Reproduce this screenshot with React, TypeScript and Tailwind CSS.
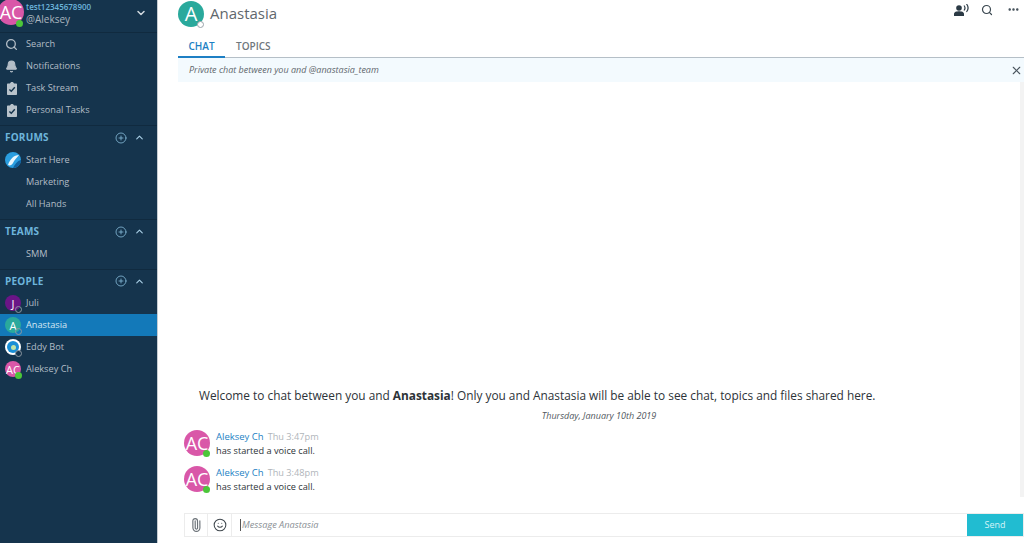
import { Search, Bell, ChevronDown, ChevronUp, CirclePlus, X, MoreHorizontal, Paperclip, Smile } from 'lucide-react'
import type { ReactNode } from 'react'

// Avatar with presence dot
const Avatar = ({ size, bg, label, textSize, status, dotClass }: { size: string; bg: string; label: string; textSize: string; status: string; dotClass: string }) => (
  <div className={`relative shrink-0 rounded-full flex items-center justify-center text-white ${size} ${bg} ${textSize}`}>
    <span className="leading-none">{label}</span>
    <span className={`absolute rounded-full w-[7px] h-[7px] ${dotClass} ${status}`}></span>
  </div>
)

// Filled clipboard with a tick, lucide only has the outlined one
const TaskIcon = () => (
  <svg width="12" height="13" viewBox="0 0 12 13" className="ml-[1px]">
    <path d="M1 2.2C1 1.8 1.3 1.5 1.7 1.5H4C4.2 .7 4.9 0 6 0S7.8 .7 8 1.5H10.3C10.7 1.5 11 1.8 11 2.2V12C11 12.5 10.7 13 10.2 13H1.8C1.3 13 1 12.5 1 12Z" fill="#b9c3cb" />
    <path d="M3.4 7.4L5.3 9.3L8.8 5.3" fill="none" stroke="#15344d" strokeWidth="1.4" />
  </svg>
)

const NavRow = ({ icon, label, active }: { icon?: ReactNode; label: string; active?: boolean }) => (
  <div className={`h-[22px] flex items-center text-[9.2px] ${active ? 'bg-[#1379b9] text-[#d5e6f2]' : 'text-[#b3bdc6]'}`}>
    <div className="w-[26px] pl-[5px] shrink-0 flex items-center">{icon}</div>
    <span>{label}</span>
  </div>
)

const SectionHead = ({ label, tall }: { label: string; tall?: boolean }) => (
  <div className={`flex items-center pl-[5px] pr-[12px] ${tall ? 'h-[23px]' : 'h-[22px]'}`}>
    <span className="text-[10px] font-bold text-[#6db5dc] tracking-[0.2px] flex-1">{label}</span>
    <CirclePlus size={12} className="text-[#8fc6e4] mr-[7px]" strokeWidth={1.5} />
    <ChevronUp size={11} className="text-[#a9cfe6]" strokeWidth={2.5} />
  </div>
)

const MiniAvatar = ({ bg, label, green }: { bg: string; label: string; green?: boolean }) => (
  <div className={`relative w-4 h-4 rounded-full flex items-center justify-center text-[11px] leading-none text-white ${bg}`}>
    {label}
    <span className={`absolute right-[-1px] bottom-[-2px] w-[7px] h-[7px] rounded-full ${green ? 'bg-[#4cc639]' : 'border border-[#8b97a1] bg-transparent'}`}></span>
  </div>
)

const Message = ({ time }: { time: string }) => (
  <div className="flex h-[36px]">
    <Avatar size="w-[26px] h-[26px] mt-[-1px]" bg="bg-[#d957a8]" label="AC" textSize="text-[18px]" status="right-0 bottom-[-1px]" dotClass="bg-[#4cc639]" />
    <div className="ml-[6px] text-[9.2px] leading-[14px] mt-[-1px]">
      <div>
        <span className="text-[#1d7fc4] text-[9.5px] font-medium">Aleksey Ch</span>
        <span className="text-[#b0b5ba] ml-[4px]">{time}</span>
      </div>
      <div className="text-[#2d3338]">has started a voice call.</div>
    </div>
  </div>
)

export default function App() {
  return (
    <div className="w-[1024px] h-[543px] overflow-hidden flex bg-white font-['Open_Sans',sans-serif]">
      {/* Sidebar */}
      <aside className="w-[158px] shrink-0 bg-[#15344d] flex flex-col border-r border-[#c5ccd2]">
        <div className="h-[33px] shrink-0 flex items-center border-b border-[#102a3f] pr-[10px]">
          <Avatar size="w-[26px] h-[26px] ml-[-2px] mt-[-8px]" bg="bg-[#d957a8]" label="AC" textSize="text-[18px]" status="right-[1px] bottom-[-2px]" dotClass="bg-[#4cc639]" />
          <div className="ml-[2px] flex-1 mt-[-4px]">
            <div className="text-[8px] leading-[11px] font-semibold text-[#6db5dc]">test12345678900</div>
            <div className="text-[10px] leading-[15px] text-[#aab5be]">@Aleksey</div>
          </div>
          <ChevronDown size={12} strokeWidth={3} className="text-[#d0d8de] mt-[-7px]" />
        </div>
        <div className="pb-[4px] border-b border-[#102a3f]">
          <NavRow label="Search" icon={<Search size={13} strokeWidth={2.4} className="text-[#b3bdc6]" />} />
          <NavRow label="Notifications" icon={<Bell size={13} fill="currentColor" className="text-[#b3bdc6]" />} />
          <NavRow label="Task Stream" icon={<TaskIcon />} />
          <NavRow label="Personal Tasks" icon={<TaskIcon />} />
        </div>
        <div className="pb-[4px] border-b border-[#102a3f]">
          <SectionHead label="FORUMS" tall />
          <NavRow
            label="Start Here"
            icon={
              <svg width="16" height="16" viewBox="0 0 16 16">
                <circle cx="8" cy="8" r="8" fill="#2a9ee0" />
                <path d="M3 13C5 7 9 3 14 3C12 6 9 8 8 11C7 13 5 14 3 13Z" fill="#e9f6fd" />
                <path d="M8 16C10 12 12 9 16 8C16 12 13 16 8 16Z" fill="#0f5f9e" />
              </svg>
            }
          />
          <NavRow label="Marketing" />
          <NavRow label="All Hands" />
        </div>
        <div className="pb-[4px] border-b border-[#102a3f]">
          <SectionHead label="TEAMS" tall />
          <NavRow label="SMM" />
        </div>
        <div>
          <SectionHead label="PEOPLE" />
          <NavRow label="Juli" icon={<MiniAvatar bg="bg-[#6a1587]" label="J" />} />
          <NavRow label="Anastasia" active icon={<MiniAvatar bg="bg-[#2aa99c]" label="A" />} />
          <NavRow
            label="Eddy Bot"
            icon={
              <div className="relative w-4 h-4 rounded-full bg-white flex items-center justify-center">
                <div className="w-3 h-3 rounded-full bg-[#1a8fd6] flex items-center justify-center">
                  <div className="w-[5px] h-[5px] rounded-full bg-[#bfe3a8]"></div>
                </div>
                <span className="absolute right-[-1px] bottom-[-2px] w-[7px] h-[7px] rounded-full bg-[#15344d] border border-[#8b97a1]"></span>
              </div>
            }
          />
          <NavRow label="Aleksey Ch" icon={<MiniAvatar bg="bg-[#d957a8]" label="AC" green />} />
        </div>
      </aside>

      {/* Main */}
      <main className="flex-1 min-w-0 flex flex-col relative">
        <div className="h-[40px] shrink-0 flex items-start pl-[20px] pr-[4px]">
          <Avatar size="w-[26px] h-[26px] mt-[1px]" bg="bg-[#2aa99c]" label="A" textSize="text-[20px]" status="right-0 bottom-[-1px]" dotClass="bg-white border border-[#9aa3aa]" />
          <span className="ml-[6px] text-[15px] leading-[26px] text-[#5f676d]">Anastasia</span>
          <div className="ml-auto flex items-center gap-[12px] h-[19px]">
            <svg width="15" height="12" viewBox="0 0 15 12" fill="#2b3a45">
              <circle cx="5" cy="4" r="2.8" />
              <path d="M0 12V10C0 8 2.5 7.3 5 7.3S10 8 10 10V12Z" />
              <path d="M10 1.5C11.2 3 11.2 5 10 6.5M12.5 0C14.5 2.5 14.5 5.5 12.5 8" fill="none" stroke="#2b3a45" strokeWidth="1.2" />
            </svg>
            <Search size={12} strokeWidth={2.4} className="text-[#3a4750]" />
            <MoreHorizontal size={13} strokeWidth={2.5} className="text-[#3a4750] ml-[2px]" />
          </div>
        </div>
        <div className="ml-[20px] h-[18px] shrink-0 flex border-b border-[#b5bfc7] text-[10px] font-semibold">
          <div className="w-[47px] h-[18px] border-b-2 border-[#1d7fc4] text-center text-[#1d7fc4] leading-[13px]">CHAT</div>
          <div className="ml-[11px] text-[#6f777d] leading-[13px]">TOPICS</div>
        </div>
        <div className="ml-[20px] h-[24px] shrink-0 bg-[#f3fafe] flex items-center pl-[11px] pr-[1px] text-[9px] italic text-[#5f676d]">
          <span className="flex-1">Private chat between you and @anastasia_team</span>
          <X size={13} className="text-[#4a555e]" />
        </div>
        <div className="flex-1 flex flex-col justify-end pl-[26px]">
          <p className="ml-[15px] text-[11.85px] leading-[18px] text-[#2d3338]">
            Welcome to chat between you and <b>Anastasia</b>! Only you and Anastasia will be able to see chat, topics and files shared here.
          </p>
          <div className="mt-[5px] mb-[8px] text-center text-[9px] leading-[14px] italic text-[#4f575d] pr-[10px]">Thursday, January 10th 2019</div>
          <Message time="Thu 3:47pm" />
          <Message time="Thu 3:48pm" />
          <div className="h-[10px]"></div>
        </div>
        <div className="h-[24px] ml-[26px] mb-[6px] shrink-0 flex border border-[#ececec]">
          <div className="w-[23px] flex items-center justify-center border-r border-[#ececec]">
            <Paperclip size={14} className="text-[#6b7278] rotate-[-45deg]" />
          </div>
          <div className="w-[24px] flex items-center justify-center border-r border-[#ececec]">
            <Smile size={14} strokeWidth={1.8} className="text-[#3f474d]" />
          </div>
          <div className="flex-1 flex items-center pl-[8px] text-[9.2px] italic text-[#8a9095]">
            <span className="w-px h-[12px] bg-[#555] mr-px"></span>Message Anastasia
          </div>
          <div className="w-[56px] bg-[#21bcd1] text-[#d6f4f8] text-[9px] flex items-center justify-center">Send</div>
        </div>
        <div className="absolute right-0 top-[82px] w-[4px] h-[415px] bg-[#f3f3f3]"></div>
      </main>
    </div>
  )
}
